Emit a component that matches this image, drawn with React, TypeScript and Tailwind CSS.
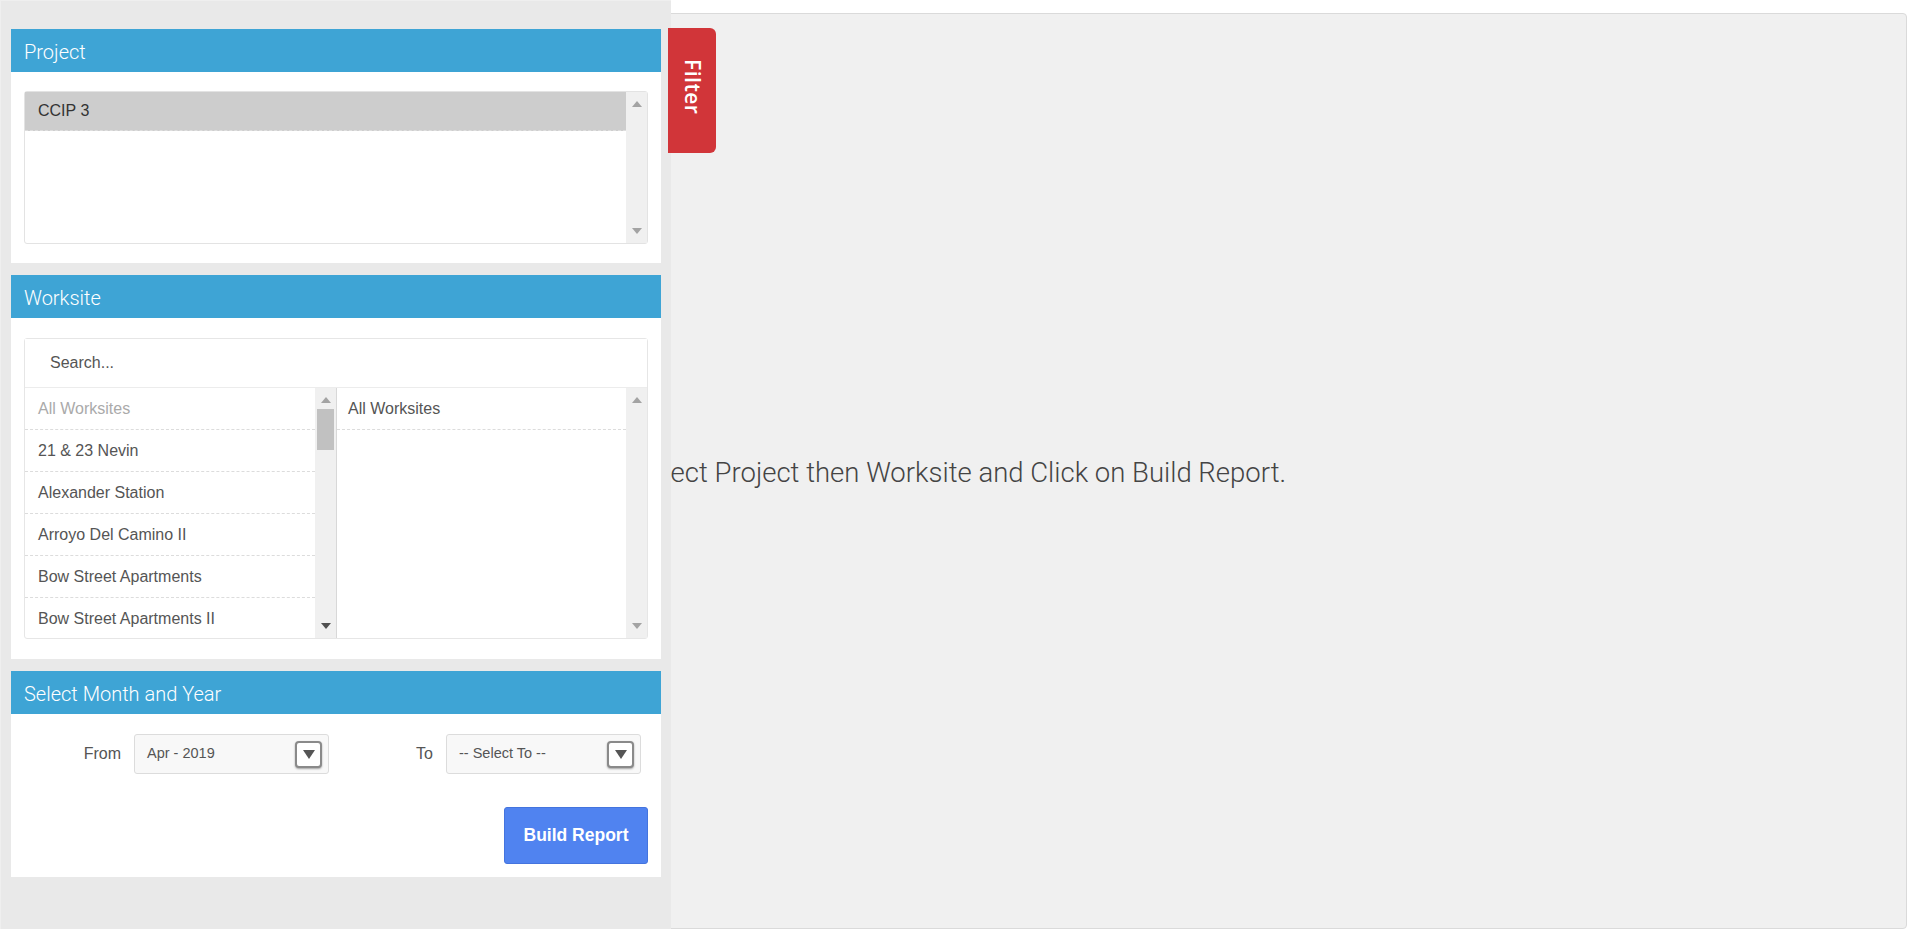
import React from 'react';

const worksites = [
  'All Worksites',
  '21 & 23 Nevin',
  'Alexander Station',
  'Arroyo Del Camino II',
  'Bow Street Apartments',
  'Bow Street Apartments II',
];

const ArrowUp = () => (
  <span className="block h-0 w-0 border-x-[5px] border-b-[6px] border-x-transparent border-b-[#a3a3a3]" />
);

const ArrowDown = () => (
  <span className="block h-0 w-0 border-x-[5px] border-t-[6px] border-x-transparent border-t-[#a3a3a3]" />
);

const ScrollTrack = ({ thumb = false, dark = false }: { thumb?: boolean; dark?: boolean }) => (
  <div className="flex w-[21px] shrink-0 flex-col items-center bg-[#f0f0f0] pt-[9px] pb-[9px]">
    <ArrowUp />
    {thumb && <div className="mt-[6px] h-[41px] w-[17px] bg-[#c1c1c1]" />}
    <div className="flex-1" />
    {dark ? (
      <span className="block h-0 w-0 border-x-[5px] border-t-[6px] border-x-transparent border-t-[#505050]" />
    ) : (
      <ArrowDown />
    )}
  </div>
);

const PanelHeader = ({ title }: { title: string }) => (
  <div className="flex h-[43px] items-center bg-[#3ea4d5] px-[13px] pt-[3px] font-['Roboto',sans-serif] text-[20px] font-light text-white">
    {title}
  </div>
);

const SelectBox = ({ value }: { value: string }) => (
  <div className="flex h-[40px] w-[195px] shrink-0 items-center justify-between rounded-[3px] border border-[#dcdcdc] bg-[#f8f8f8] pr-[6px] pl-[12px] text-[14.5px] text-[#555]">
    <span>{value}</span>
    <span className="flex h-[27px] w-[27px] items-center justify-center rounded-[4px] border-2 border-[#8a8a8a] bg-white shadow-[0_1px_2px_rgba(0,0,0,0.35)]">
      <span className="block h-0 w-0 border-x-[6px] border-t-[9px] border-x-transparent border-t-[#555]" />
    </span>
  </div>
);

export default function App() {
  return (
    <div className="relative h-[942px] w-full overflow-hidden bg-white font-['Liberation_Sans',Arial,sans-serif]">
      {/* Report area */}
      <div className="mx-[13px] mt-[13px] flex h-[916px] items-center justify-center rounded-[4px] border border-[#dadada] bg-[#f0f0f0] pt-[4px]">
        <p className="font-['Roboto',sans-serif] text-[27.5px] font-light text-[#444]">
          Select Project then Worksite and Click on Build Report.
        </p>
      </div>

      {/* Filter sidebar */}
      <aside className="absolute top-0 left-0 flex h-[929px] w-[671px] flex-col gap-[12px] border-t border-l border-[#efefef] bg-[#e9e9e9] pt-[28px] pl-[10px]">
        {/* Project */}
        <section className="w-[650px] bg-white">
          <PanelHeader title="Project" />
          <div className="px-[13px] py-[19px]">
            <div className="flex h-[153px] rounded-[3px] border border-[#e3e3e3]">
              <div className="flex-1">
                <div className="flex h-[39px] items-center border-b border-dashed border-[#dedede] bg-[#cdcdcd] px-[13px] text-[16px] text-[#333]">
                  CCIP 3
                </div>
              </div>
              <ScrollTrack />
            </div>
          </div>
        </section>

        {/* Worksite */}
        <section className="w-[650px] bg-white">
          <PanelHeader title="Worksite" />
          <div className="px-[13px] py-[20px]">
            <div className="rounded-[3px] border border-[#e6e6e6]">
              <input
                readOnly
                placeholder="Search..."
                className="block h-[49px] w-full border-b border-[#ececec] bg-white pl-[25px] text-[16px] text-[#555] outline-none placeholder:text-[#555]"
              />
              <div className="flex h-[250px] overflow-hidden">
                <div className="w-[290px] shrink-0">
                  {worksites.map((site, i) => (
                    <div
                      key={site}
                      className={`flex h-[42px] items-center border-b border-dashed border-[#dcdcdc] px-[13px] text-[16px] ${
                        i === 0 ? 'text-[#aaa]' : 'text-[#555]'
                      }`}
                    >
                      {site}
                    </div>
                  ))}
                </div>
                <ScrollTrack thumb dark />
                <div className="flex-1 border-l border-[#d8d8d8]">
                  <div className="flex h-[42px] items-center border-b border-dashed border-[#dcdcdc] px-[11px] text-[16px] text-[#555]">
                    All Worksites
                  </div>
                </div>
                <ScrollTrack />
              </div>
            </div>
          </div>
        </section>

        {/* Month and year */}
        <section className="w-[650px] bg-white">
          <PanelHeader title="Select Month and Year" />
          <div className="px-[13px] pt-[20px] pb-[13px]">
            <div className="flex">
              <div className="flex w-[312px] items-center">
                <label className="w-[110px] shrink-0 pr-[13px] text-right text-[16px] text-[#555]">From</label>
                <SelectBox value="Apr - 2019" />
              </div>
              <div className="flex w-[312px] items-center">
                <label className="w-[110px] shrink-0 pr-[13px] text-right text-[16px] text-[#555]">To</label>
                <SelectBox value="-- Select To --" />
              </div>
            </div>
            <div className="mt-[33px] flex justify-end">
              <button className="h-[57px] w-[144px] rounded-[3px] border border-[#4474de] bg-[#5083f0] text-[17.5px] font-bold text-white">
                Build Report
              </button>
            </div>
          </div>
        </section>
      </aside>

      {/* Filter tab */}
      <div className="absolute top-[28px] left-[668px] flex h-[125px] w-[48px] items-center justify-center rounded-r-[6px] bg-[#d13539] pb-[8px]">
        <span className="font-['Open_Sans',sans-serif] text-[21px] font-semibold tracking-[0.5px] text-white [writing-mode:vertical-rl]">
          Filter
        </span>
      </div>
    </div>
  );
}
